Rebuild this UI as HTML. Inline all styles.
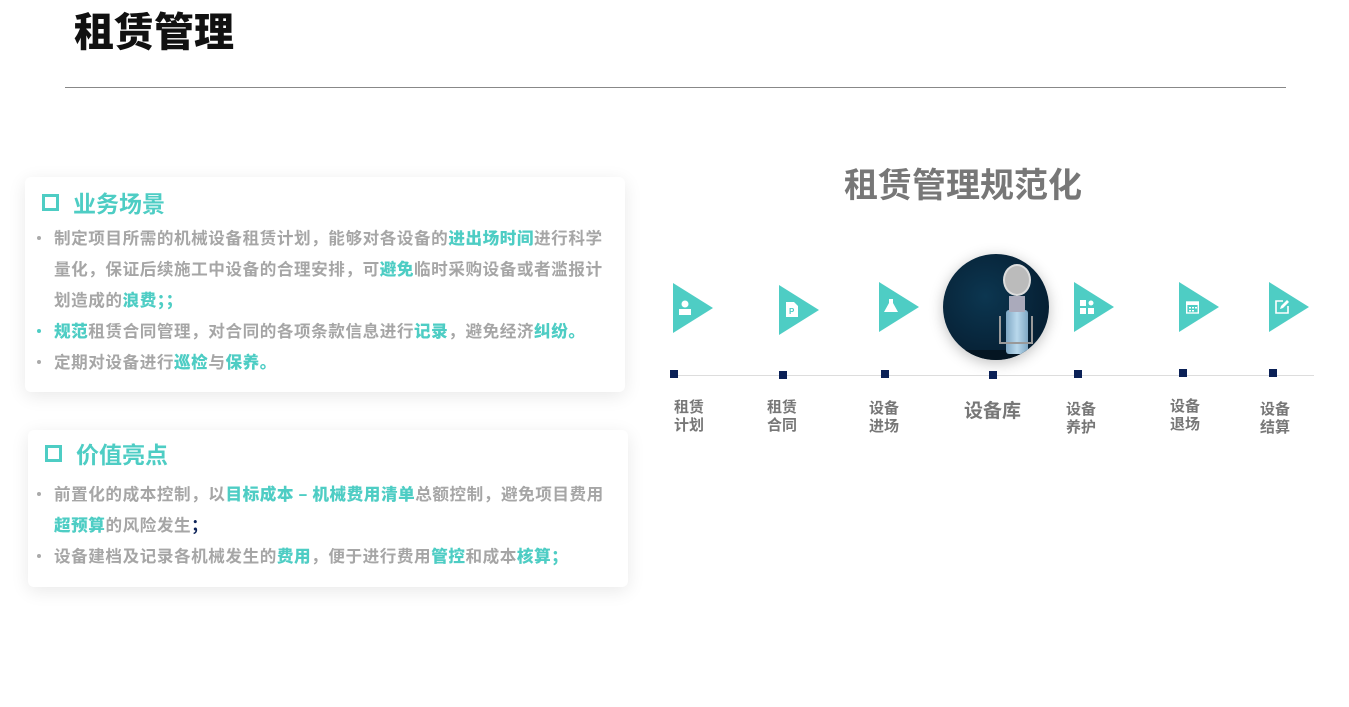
<!DOCTYPE html>
<html><head><meta charset="utf-8"><style>
*{margin:0;padding:0;box-sizing:border-box}
body{width:1349px;height:707px;background:#fff;position:relative;overflow:hidden;font-family:"Liberation Sans","Noto Sans CJK SC",sans-serif;font-weight:bold}
.abs{position:absolute}
h1{position:absolute;left:74px;top:0px;font-size:40px;color:#111;font-weight:900;letter-spacing:0px}
.hr{position:absolute;left:65px;top:87px;width:1221px;height:1px;background:#888}
.card{position:absolute;background:#fff;border-radius:6px;box-shadow:0 4px 18px rgba(0,0,0,0.09)}
.ct{position:absolute;font-size:23px;color:#4ecdc4;display:flex;align-items:center}
.ct i{display:inline-block;width:17px;height:17px;border:3px solid #4ecdc4;margin-right:14px}
.ul{position:absolute;font-size:16.6px;letter-spacing:0.55px;color:#a6a6a6;line-height:31px;white-space:nowrap;font-family:"Noto Sans CJK SC",sans-serif}
.ul p{position:relative;padding-left:0}
.ul p:before{content:"";position:absolute;left:-17px;top:14px;width:4px;height:4px;border-radius:50%;background:#aaa}
.ul p.t:before{background:#4ecdc4}
b{color:#4ecdc4}
.tri{position:absolute;width:0;height:0;border-top:25px solid transparent;border-bottom:25px solid transparent;border-left:40px solid #4ecdc4}
.dot{position:absolute;width:8px;height:8px;background:#0b2157;top:370px}
.lb{position:absolute;font-size:15px;color:#777;line-height:18px;text-align:center}
</style></head><body>
<h1>租赁管理</h1>
<div class="hr"></div>

<div class="card" style="left:25px;top:177px;width:600px;height:215px"></div>
<div class="ct" style="left:42px;top:185px"><i></i>业务场景</div>
<div class="ul" style="left:54px;top:222px;width:560px">
<p>制定项目所需的机械设备租赁计划，能够对各设备的<b>进出场时间</b>进行科学<br>量化，保证后续施工中设备的合理安排，可<b>避免</b>临时采购设备或者滥报计<br>划造成的<b>浪费；；</b></p>
<p class="t"><b>规范</b>租赁合同管理，对合同的各项条款信息进行<b>记录</b>，避免经济<b>纠纷。</b></p>
<p>定期对设备进行<b>巡检</b>与<b>保养。</b></p>
</div>

<div class="card" style="left:28px;top:430px;width:600px;height:157px"></div>
<div class="ct" style="left:45px;top:436px"><i></i>价值亮点</div>
<div class="ul" style="left:54px;top:478px;width:560px">
<p>前置化的成本控制，以<b>目标成本 – 机械费用清单</b>总额控制，避免项目费用<br><b>超预算</b>的风险发生<span style="color:#0b2157">；</span></p>
<p>设备建档及记录各机械发生的<b>费用</b>，便于进行费用<b>管控</b>和成本<b>核算；</b></p>
</div>

<div class="abs" style="left:844px;top:158px;font-size:34px;color:#777">租赁管理规范化</div>

<div class="tri" style="left:673px;top:283px"></div>
<div class="tri" style="left:779px;top:285px"></div>
<div class="tri" style="left:879px;top:282px"></div>
<div class="tri" style="left:1074px;top:282px"></div>
<div class="tri" style="left:1179px;top:282px"></div>
<div class="tri" style="left:1269px;top:282px"></div>

<svg class="abs" style="left:678px;top:300px" width="14" height="16" viewBox="0 0 14 16"><circle cx="7" cy="4" r="3.5" fill="#fff"/><rect x="1" y="9" width="12" height="6" fill="#fff"/></svg>
<svg class="abs" style="left:786px;top:302px" width="12" height="15" viewBox="0 0 12 15"><path d="M0 0h8l4 4v11H0z" fill="#fff"/><text x="3" y="12" font-size="8" fill="#4ecdc4">P</text></svg>
<svg class="abs" style="left:884px;top:299px" width="14" height="14" viewBox="0 0 14 14"><path d="M5 0h4v4l5 9H0l5-9z" fill="#fff"/></svg>
<svg class="abs" style="left:1080px;top:300px" width="14" height="15" viewBox="0 0 14 15"><rect x="0" y="0" width="6" height="6" fill="#fff"/><rect x="0" y="8" width="6" height="6" fill="#fff"/><rect x="8" y="8" width="6" height="6" fill="#fff"/><circle cx="11" cy="3" r="2.5" fill="#fff"/></svg>
<svg class="abs" style="left:1186px;top:300px" width="13" height="14" viewBox="0 0 13 14"><rect x="0.7" y="2" width="11.6" height="11" fill="none" stroke="#fff" stroke-width="1.4"/><rect x="0" y="2" width="13" height="3" fill="#fff"/><g fill="#fff"><rect x="3" y="7" width="2" height="1.5"/><rect x="6" y="7" width="2" height="1.5"/><rect x="9" y="7" width="2" height="1.5"/><rect x="3" y="10" width="2" height="1.5"/><rect x="6" y="10" width="2" height="1.5"/></g></svg>
<svg class="abs" style="left:1275px;top:300px" width="14" height="14" viewBox="0 0 14 14"><path d="M8 1H1v12h12V6" fill="none" stroke="#fff" stroke-width="1.6"/><path d="M5 9l1-3 6-6 2 2-6 6z" fill="#fff"/></svg>

<div class="abs" style="left:943px;top:254px;width:106px;height:106px;border-radius:50%;background:radial-gradient(circle at 40% 40%,#0c3650,#062034 70%);box-shadow:0 3px 14px rgba(0,0,0,0.25);overflow:hidden">
<div class="abs" style="left:0;top:96px;width:106px;height:10px;background:#041522"></div>
<div class="abs" style="left:63px;top:56px;width:22px;height:44px;background:linear-gradient(90deg,#7fa8c4,#b9d8ec,#7fa8c4);border-radius:3px"></div>
<div class="abs" style="left:66px;top:42px;width:16px;height:16px;background:#aab"></div>
<div class="abs" style="left:60px;top:10px;width:28px;height:32px;border-radius:50%;background:#bbb;border:2px solid #ddd"></div>
<div class="abs" style="left:56px;top:62px;width:34px;height:28px;border:2px solid #999;border-top:none"></div>
</div>

<div class="abs" style="left:673px;top:375px;width:641px;height:1px;background:#ddd"></div>
<div class="dot" style="left:670px"></div>
<div class="dot" style="left:779px;top:371px"></div>
<div class="dot" style="left:881px"></div>
<div class="dot" style="left:989px;top:371px"></div>
<div class="dot" style="left:1074px"></div>
<div class="dot" style="left:1179px;top:369px"></div>
<div class="dot" style="left:1269px;top:369px"></div>

<div class="lb" style="left:674px;top:399px">租赁<br>计划</div>
<div class="lb" style="left:767px;top:399px">租赁<br>合同</div>
<div class="lb" style="left:869px;top:400px">设备<br>进场</div>
<div class="lb" style="left:964px;top:402px;font-size:19px;line-height:20px">设备库</div>
<div class="lb" style="left:1066px;top:401px">设备<br>养护</div>
<div class="lb" style="left:1170px;top:398px">设备<br>退场</div>
<div class="lb" style="left:1260px;top:401px">设备<br>结算</div>
</body></html>
